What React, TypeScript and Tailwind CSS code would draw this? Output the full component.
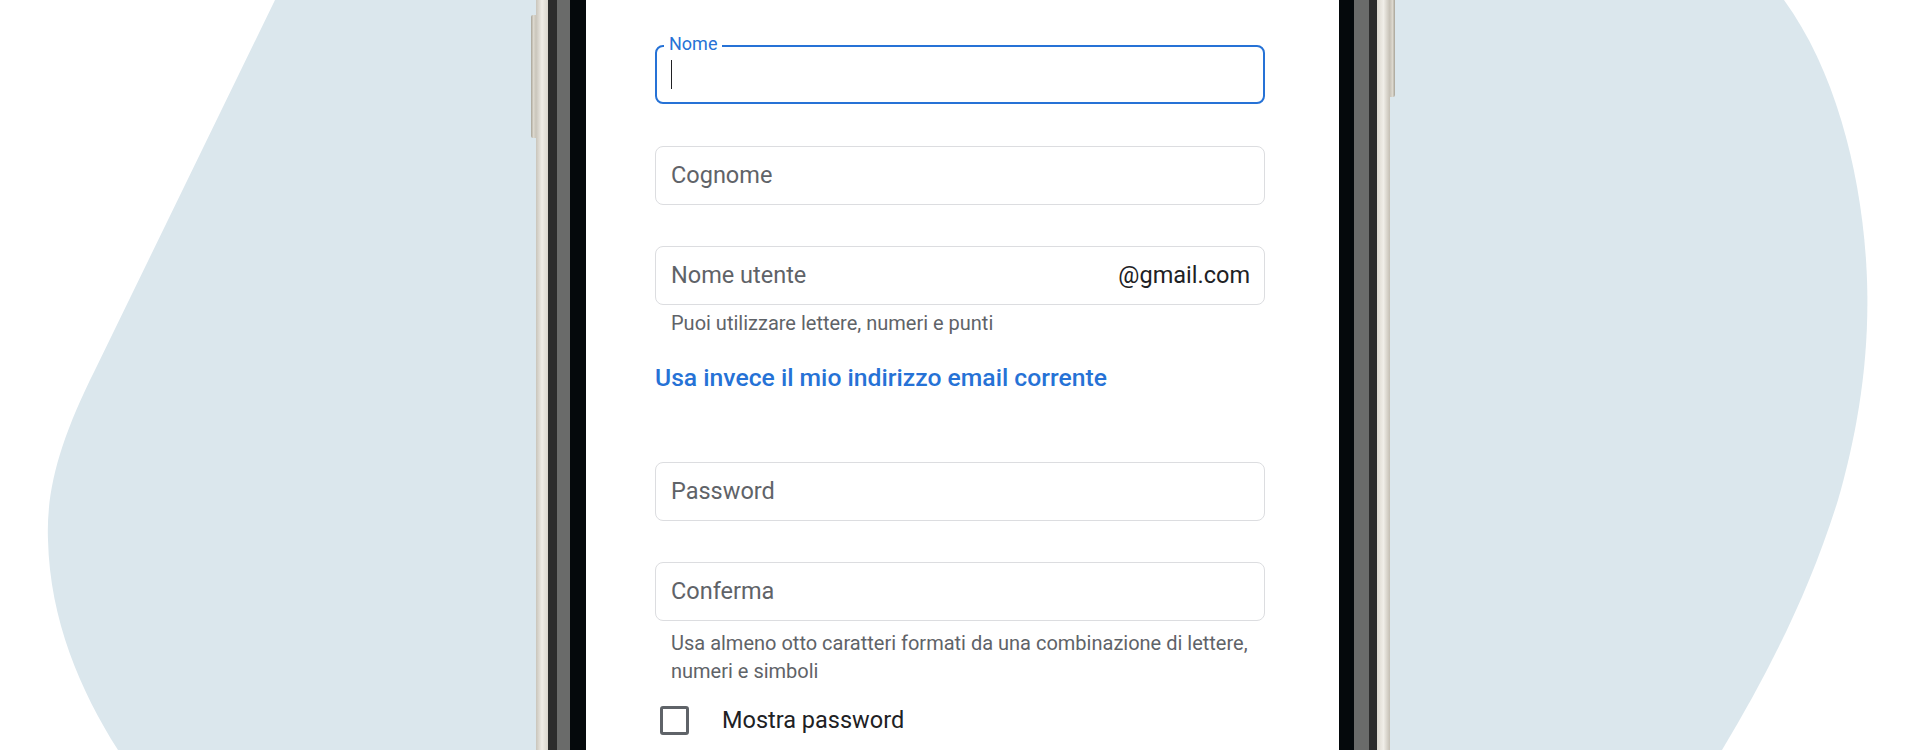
import React from "react";

function Field({ label, suffix }: { label: string; suffix?: string }) {
  return (
    <div className="flex h-[59px] items-center justify-between rounded-[8px] border border-[#dcdde0] pl-[15px] pr-[14px]">
      <span className="text-[23.5px] text-[#5f6368]">{label}</span>
      {suffix ? <span className="text-[23.5px] text-[#202124]">{suffix}</span> : null}
    </div>
  );
}

function FocusedField() {
  return (
    <div className="relative flex h-[59px] items-center rounded-[8px] border-[2.5px] border-[#2672d6] pl-[13.5px]">
      <span className="absolute left-[7px] top-[-15px] bg-white px-[5px] text-[18px] leading-[24px] text-[#2672d6]">
        Nome
      </span>
      <div className="h-[29px] w-[1.5px] bg-[#202124]" />
    </div>
  );
}

function Strip({ className }: { className: string }) {
  return <div className={`h-full shrink-0 ${className}`} />;
}

export default function App() {
  return (
    <div
      className="relative h-[750px] w-[1920px] overflow-hidden bg-white"
      style={{ fontFamily: "Roboto, 'Liberation Sans', sans-serif" }}
    >
      <svg className="absolute inset-0" width="1920" height="750" viewBox="0 0 1920 750">
        <path
          d="M275,0 L95,370 C60,440 46,490 48,540 C50,620 80,690 118,750 L960,750 L960,0 Z"
          fill="#dbe7ed"
        />
        <path
          d="M1784,0 C1835,70 1860,170 1866,260 C1872,350 1858,430 1838,500 C1810,590 1770,670 1722,750 L960,750 L960,0 Z"
          fill="#dbe7ed"
        />
      </svg>

      <div className="relative flex h-full justify-center pl-[6px]">
        <div className="flex h-full">
          {/* left side button */}
          <div className="w-[5px] shrink-0">
            <div className="mt-[15px] h-[123px] w-[5px] rounded-l-[2px] bg-gradient-to-r from-[#a8a498] via-[#dcd8ce] to-[#c9c5ba]" />
          </div>
          <Strip className="w-[12px] bg-gradient-to-r from-[#c9c5bb] via-[#efece6] to-[#d9d5cc]" />
          <Strip className="w-[9px] bg-[#2c2c2c]" />
          <Strip className="w-[13px] bg-[#6a6b6a]" />
          <Strip className="w-[16px] bg-[#05090c]" />

          {/* screen */}
          <div className="h-full w-[753px] shrink-0 bg-white">
            <div className="ml-[69px] w-[610px] pt-[45px]">
              <FocusedField />
              <div className="mt-[42px]">
                <Field label="Cognome" />
              </div>
              <div className="mt-[41px]">
                <Field label="Nome utente" suffix="@gmail.com" />
              </div>
              <p className="mt-[5px] pl-[16px] text-[20px] leading-[26px] text-[#5f6368]">
                Puoi utilizzare lettere, numeri e punti
              </p>
              <p className="mt-[26px] text-[24.7px] font-medium leading-[32px] text-[#2672d6]">
                Usa invece il mio indirizzo email corrente
              </p>
              <div className="mt-[68px]">
                <Field label="Password" />
              </div>
              <div className="mt-[41px]">
                <Field label="Conferma" />
              </div>
              <p className="mt-[8px] pl-[16px] pr-[8px] text-[20px] leading-[28px] text-[#5f6368]">
                Usa almeno otto caratteri formati da una combinazione di lettere, numeri e simboli
              </p>
              <div className="mt-[20px] flex items-center pl-[5px]">
                <div className="h-[29px] w-[29px] rounded-[3px] border-[3px] border-[#5f6368]" />
                <span className="ml-[33px] text-[23.5px] leading-[30px] text-[#202124]">Mostra password</span>
              </div>
            </div>
          </div>

          <Strip className="w-[15px] bg-[#05090c]" />
          <Strip className="w-[15px] bg-[#6a6b6a]" />
          <Strip className="w-[8px] bg-[#2c2c2c]" />
          <Strip className="w-[13px] bg-gradient-to-r from-[#dcd8cf] via-[#f0eee8] to-[#c4bfb4]" />
          {/* right side button */}
          <div className="w-[5px] shrink-0">
            <div className="h-[97px] w-[5px] rounded-br-[2px] bg-gradient-to-r from-[#c8c3b8] via-[#dcd8ce] to-[#a8a498]" />
          </div>
        </div>
      </div>
    </div>
  );
}
